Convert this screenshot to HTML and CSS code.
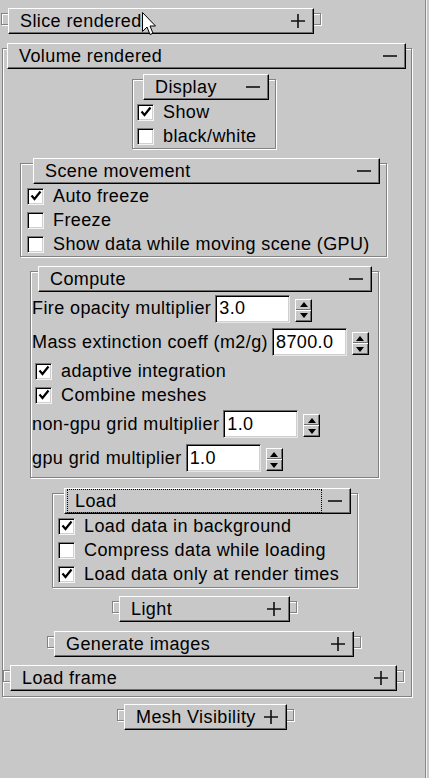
FILE: index.html
```html
<!DOCTYPE html>
<html>
<head>
<meta charset="utf-8">
<link rel="stylesheet" href="styles.css">
</head>
<body>
<div class="win">
  <div class="ro col slice">
    <div class="hd"><span class="lbl">Slice rendered</span><svg class="pm" width="14" height="14" viewBox="0 0 14 14"><path d="M0 7H14M7 0V14"/></svg></div>
  </div>

  <div class="ro vol">
    <div class="hd"><span class="lbl">Volume rendered</span><svg class="pm" width="14" height="14" viewBox="0 0 14 14"><path d="M0 7H14"/></svg></div>

    <div class="ro display">
      <div class="hd"><span class="lbl">Display</span><svg class="pm" width="14" height="14" viewBox="0 0 14 14"><path d="M0 7H14"/></svg></div>
      <div class="row"><span class="box on"><svg width="14" height="14" viewBox="0 0 14 14"><path d="M2.5 6.5L5.5 10L11.5 2.5"/></svg></span>Show</div>
      <div class="row"><span class="box"></span>black/white</div>
    </div>

    <div class="ro scene">
      <div class="hd"><span class="lbl">Scene movement</span><svg class="pm" width="14" height="14" viewBox="0 0 14 14"><path d="M0 7H14"/></svg></div>
      <div class="row"><span class="box on"><svg width="14" height="14" viewBox="0 0 14 14"><path d="M2.5 6.5L5.5 10L11.5 2.5"/></svg></span>Auto freeze</div>
      <div class="row"><span class="box"></span>Freeze</div>
      <div class="row"><span class="box"></span>Show data while moving scene (GPU)</div>
    </div>

    <div class="ro compute">
      <div class="hd"><span class="lbl">Compute</span><svg class="pm" width="14" height="14" viewBox="0 0 14 14"><path d="M0 7H14"/></svg></div>
      <div class="frow first"><span>Fire opacity multiplier</span><span class="tf">3.0</span><span class="spin"><i class="up"></i><i class="dn"></i></span></div>
      <div class="frow"><span>Mass extinction coeff (m2/g)</span><span class="tf">8700.0</span><span class="spin"><i class="up"></i><i class="dn"></i></span></div>
      <div class="row ind"><span class="box on"><svg width="14" height="14" viewBox="0 0 14 14"><path d="M2.5 6.5L5.5 10L11.5 2.5"/></svg></span>adaptive integration</div>
      <div class="row ind"><span class="box on"><svg width="14" height="14" viewBox="0 0 14 14"><path d="M2.5 6.5L5.5 10L11.5 2.5"/></svg></span>Combine meshes</div>
      <div class="frow"><span>non-gpu grid multiplier</span><span class="tf">1.0</span><span class="spin"><i class="up"></i><i class="dn"></i></span></div>
      <div class="frow"><span>gpu grid multiplier</span><span class="tf">1.0</span><span class="spin"><i class="up"></i><i class="dn"></i></span></div>
    </div>

    <div class="ro load">
      <div class="hd"><span class="lbl focus">Load</span><svg class="pm" width="14" height="14" viewBox="0 0 14 14"><path d="M0 7H14"/></svg></div>
      <div class="row"><span class="box on"><svg width="14" height="14" viewBox="0 0 14 14"><path d="M2.5 6.5L5.5 10L11.5 2.5"/></svg></span>Load data in background</div>
      <div class="row"><span class="box"></span>Compress data while loading</div>
      <div class="row"><span class="box on"><svg width="14" height="14" viewBox="0 0 14 14"><path d="M2.5 6.5L5.5 10L11.5 2.5"/></svg></span>Load data only at render times</div>
    </div>

    <div class="ro col light">
      <div class="hd"><span class="lbl">Light</span><svg class="pm" width="14" height="14" viewBox="0 0 14 14"><path d="M0 7H14M7 0V14"/></svg></div>
    </div>
    <div class="ro col gen">
      <div class="hd"><span class="lbl">Generate images</span><svg class="pm" width="14" height="14" viewBox="0 0 14 14"><path d="M0 7H14M7 0V14"/></svg></div>
    </div>
    <div class="ro col lframe">
      <div class="hd"><span class="lbl">Load frame</span><svg class="pm" width="14" height="14" viewBox="0 0 14 14"><path d="M0 7H14M7 0V14"/></svg></div>
    </div>
  </div>

  <div class="ro col mesh">
    <div class="hd"><span class="lbl">Mesh Visibility</span><svg class="pm" width="14" height="14" viewBox="0 0 14 14"><path d="M0 7H14M7 0V14"/></svg></div>
  </div>

  <svg class="cursor" width="14" height="24" viewBox="0 0 14 24"><path d="M0.5 0.5V19.5L5 15L8 22.5L11 21.3L8 14H13.5Z" fill="#fff" stroke="#000" stroke-width="1"/></svg>
</div>
</body>
</html>
```

FILE: styles.css
```css
html, body {
  margin: 0;
  padding: 0;
  background: #c8c8c8;
}
body {
  width: 429px;
  height: 778px;
  overflow: hidden;
  font-family: "Liberation Sans", Arial, sans-serif;
  font-size: 18px;
  letter-spacing: 0.4px;
  color: #000;
}
.win {
  position: relative;
  width: 426px;
  height: 778px;
  box-sizing: border-box;
  border-right: 1px solid #8a8a8a;
  box-shadow: 1px 0 0 #f0f0f0;
  display: flex;
  flex-direction: column;
  align-items: flex-start;
}

/* rollout frame: etched */
.ro {
  box-sizing: border-box;
  border: 1px solid #828282;
  box-shadow: 1px 1px 0 #fff, inset 1px 1px 0 #fff;
  display: flex;
  flex-direction: column;
  align-items: flex-start;
}
.hd {
  box-sizing: border-box;
  height: 26px;
  margin: -6px 6px 0 6px;
  align-self: stretch;
  display: flex;
  align-items: center;
  justify-content: space-between;
  padding: 0 8px 0 11px;
  background: #c8c8c8;
  border: 1px solid;
  border-color: #fff #000 #000 #fff;
  box-shadow: inset -1px -1px 0 #6e6e6e;
  white-space: nowrap;
}
.col > .hd {
  margin-bottom: -10px;
}
.pm {
  flex: none;
}
.pm path {
  stroke: #111;
  stroke-width: 1.6;
  fill: none;
}
.lbl.focus {
  outline: 1px dotted #000;
  outline-offset: 0;
  align-self: stretch;
  display: flex;
  align-items: center;
  margin-left: -8px;
  padding-left: 7px;
  margin-top: 1px;
  margin-bottom: 1px;
  flex: 1;
  margin-right: 7px;
}

/* placements */
.slice { width: 320px; margin: 13px 0 0 1px; }
.vol { width: 410px; margin: 23px 0 0 2px; padding-bottom: 14px; }
.vol > .hd { margin-left: 4px; margin-right: 5px; }
.display { width: 144px; margin: 10px 0 0 129px; padding-left: 4px; }
.scene { width: 367px; margin: 14px 0 0 17px; padding-left: 6px; }
.compute { width: 349px; margin: 14px 0 0 27px; padding-left: 1px; padding-bottom: 2px; }
.load { width: 306px; margin: 15px 0 0 49px; padding-left: 5px; padding-bottom: 1px; }
.light { width: 185px; margin: 13px 0 0 109px; }
.gen { width: 314px; margin: 23px 0 0 44px; }
.lframe { width: 401px; margin: 22px 0 0 0; }
.mesh { width: 177px; margin: 12px 0 0 117px; }

/* checkbox rows */
.row {
  height: 24px;
  display: flex;
  align-items: center;
  white-space: nowrap;
}
.row.ind { padding-left: 3px; }
.box {
  flex: none;
  box-sizing: border-box;
  width: 17px;
  height: 17px;
  margin-right: 9px;
  background: #fff;
  border: 1px solid;
  border-color: #7a7a7a #f4f4f4 #f4f4f4 #7a7a7a;
  box-shadow: inset 1px 1px 0 #000, inset -1px -1px 0 #d0d0d0;
  display: flex;
  align-items: center;
  justify-content: center;
}
.box svg path {
  fill: none;
  stroke: #000;
  stroke-width: 2.2;
}

/* text field rows */
.frow {
  height: 34px;
  display: flex;
  align-items: center;
  white-space: nowrap;
}
.frow.first { height: 33px; }
.tf {
  box-sizing: border-box;
  width: 75px;
  height: 28px;
  margin-left: 4px;
  padding-left: 3px;
  background: #fff;
  border: 1px solid;
  border-color: #6a6a6a #e6e6e6 #e6e6e6 #6a6a6a;
  box-shadow: inset 1px 1px 0 #000, inset -1px -1px 0 #d0d0d0;
  display: flex;
  align-items: center;
}
.spin {
  flex: none;
  box-sizing: border-box;
  width: 17px;
  height: 23px;
  margin-left: 5px;
  margin-top: 3px;
  display: flex;
  flex-direction: column;
  border: 1px solid;
  border-color: #fff #000 #000 #fff;
}
.spin i {
  flex: 1;
  position: relative;
  background: #c8c8c8;
  box-shadow: inset -1px -1px 0 #6e6e6e;
  display: flex;
  align-items: center;
  justify-content: center;
}
.spin i.dn { border-top: 1px solid #fff; }
.spin i::before {
  content: "";
  width: 0;
  height: 0;
  border-left: 4px solid transparent;
  border-right: 4px solid transparent;
}
.spin i.up::before { border-bottom: 5px solid #000; }
.spin i.dn::before { border-top: 5px solid #000; }

.cursor {
  position: absolute;
  left: 142px;
  top: 12px;
}
```
